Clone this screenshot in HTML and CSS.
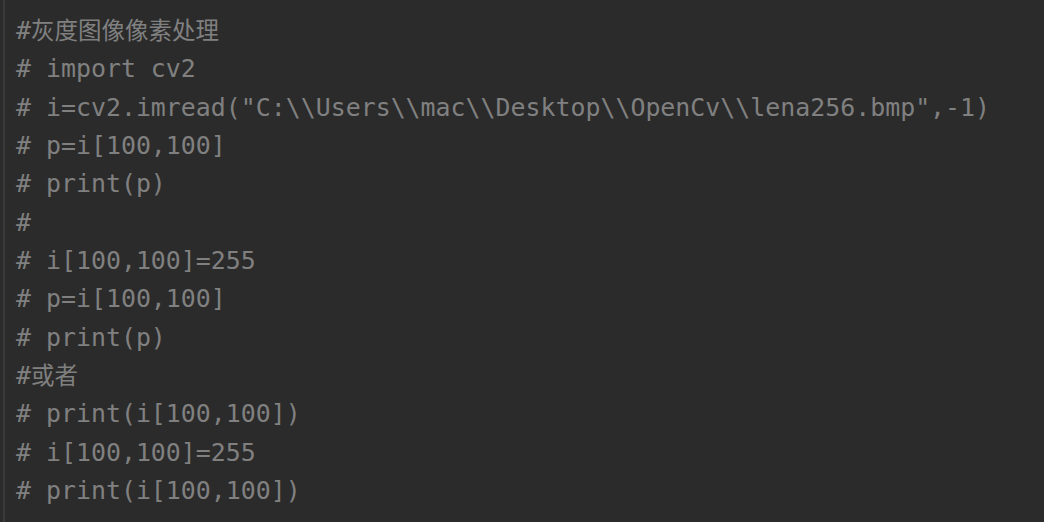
FILE: index.html
```html
<!DOCTYPE html>
<html>
<head>
<meta charset="utf-8">
<link rel="stylesheet" href="styles.css">
</head>
<body>
<div class="editor">
  <div class="code">
    <div class="line">#<span class="cjk">灰度图像像素处理</span></div>
    <div class="line"># import cv2</div>
    <div class="line"># i=cv2.imread("C:\\Users\\mac\\Desktop\\OpenCv\\lena256.bmp",-1)</div>
    <div class="line"># p=i[100,100]</div>
    <div class="line"># print(p)</div>
    <div class="line">#</div>
    <div class="line"># i[100,100]=255</div>
    <div class="line"># p=i[100,100]</div>
    <div class="line"># print(p)</div>
    <div class="line">#<span class="cjk">或者</span></div>
    <div class="line"># print(i[100,100])</div>
    <div class="line"># i[100,100]=255</div>
    <div class="line"># print(i[100,100])</div>
  </div>
</div>
</body>
</html>
```
FILE: styles.css
```css
html, body {
  margin: 0;
  padding: 0;
  background: #2b2b2b;
  height: 100%;
  overflow: hidden;
}
.editor {
  height: 522px;
  padding-left: 3px;
  display: flex;
}
.code {
  flex: 1;
  border-left: 2px solid #3a3a3a;
  padding: 12px 0 0 11px;
  font-family: "DejaVu Sans Mono", "Liberation Mono", monospace;
  font-size: 24.9px;
  line-height: 38.33px;
  color: #808080;
}
.line {
  height: 38.33px;
  white-space: pre;
}
.cjk {
  font-family: "Noto Sans CJK SC", sans-serif;
  font-size: 23.5px;
  line-height: 1;
}
```
